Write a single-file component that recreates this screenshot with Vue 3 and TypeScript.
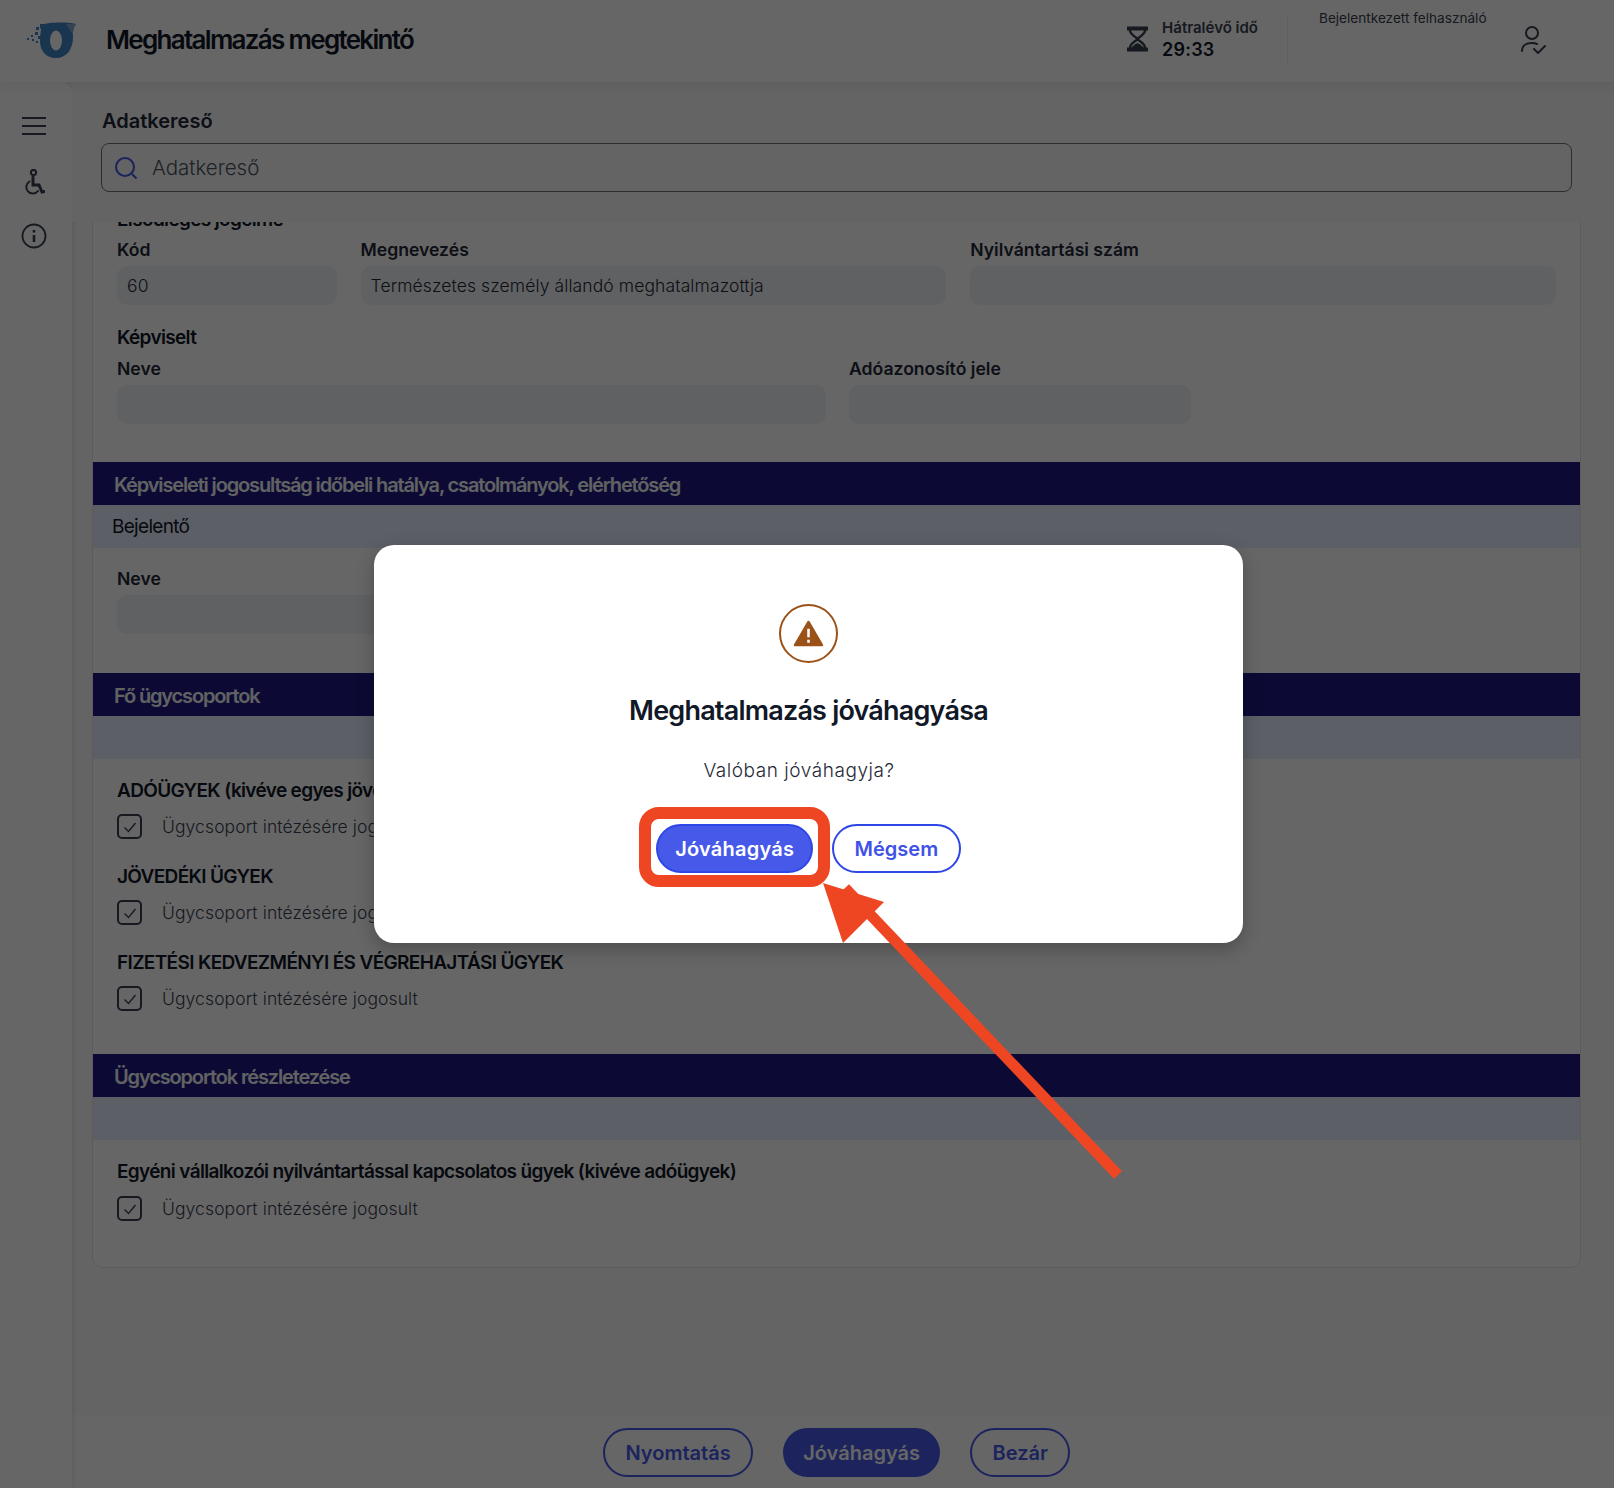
<template>
  <div class="page">
    <header class="topbar">
      <svg class="logo" viewBox="0 0 54 40" width="54" height="40">
        <path d="M16 4 C22 1 40 1 50 3 C47 7 47 10 47 16 C47 29 40 37 30 37 C20 37 14 30 14 20 C14 13 15 8 16 4 Z" fill="#3f86c8" />
        <path d="M40 3 L50 3 C47 7 47 10 47 14 Z" fill="#7fa8c8" />
        <ellipse cx="30" cy="19.5" rx="6" ry="10" fill="#fff" />
        <g fill="#3f86c8">
          <rect x="14" y="3" width="4.5" height="4.5" /><rect x="20" y="3" width="4.5" height="4" />
          <rect x="16" y="9" width="5" height="5" /><rect x="10" y="6" width="3" height="3" />
          <rect x="9" y="11" width="3" height="3" /><rect x="5" y="14" width="2" height="2" />
          <rect x="1" y="17" width="2" height="2" /><rect x="6" y="18" width="2" height="2" />
          <rect x="12" y="15" width="3" height="3" /><rect x="19" y="15" width="4" height="4" />
          <rect x="10" y="20" width="2" height="2" />
        </g>
      </svg>
      <h1 class="app-title">Meghatalmazás megtekintő</h1>
      <div class="timer">
        <svg viewBox="0 0 22 26" width="21" height="26" class="hourglass">
          <path d="M0 2 H22 M0 24 H22" stroke="#374151" stroke-width="4" fill="none" />
          <path d="M3 3 C3 9 9 10 11 13 C13 10 19 9 19 3 M3 23 C3 17 9 16 11 13 C13 16 19 17 19 23" stroke="#374151" stroke-width="2.4" fill="none" />
          <path d="M4 23 C6 20 9 18 11 17.5 C13 18 16 20 18 23 Z" fill="#374151" />
        </svg>
        <div class="timer-text">
          <span class="timer-label">Hátralévő idő</span>
          <span class="timer-value">29:33</span>
        </div>
      </div>
      <div class="user-box">
        <span class="user-label">Bejelentkezett felhasználó</span>
        <svg viewBox="0 0 26 30" width="26" height="30" class="user-icon" fill="none" stroke="#374151" stroke-width="2">
          <circle cx="12" cy="8" r="6" />
          <path d="M2 26 C2 21 6 18 12 18 C14 18 16 18.5 17 19" stroke-linecap="round" />
          <path d="M14 24 L18 28 L25 21" stroke-linecap="round" stroke-linejoin="round" />
        </svg>
      </div>
    </header>

    <div class="body-row">
      <aside class="sidebar">
        <svg viewBox="0 0 26 20" width="26" height="20" fill="none" stroke="#374151" stroke-width="2">
          <path d="M1 2 H25 M1 10 H25 M1 18 H25" />
        </svg>
        <svg viewBox="0 0 22 26" width="22" height="26" fill="none" stroke="#374151" stroke-width="2" stroke-linecap="round">
          <circle cx="10.5" cy="3.5" r="2.6" />
          <path d="M10 8 V16 H16 L19 23 L21 22.5" stroke-width="3" />
          <path d="M6.5 12.5 A6.5 6.5 0 1 0 15 22" />
        </svg>
        <svg viewBox="0 0 26 26" width="26" height="26" fill="none" stroke="#374151" stroke-width="1.8">
          <circle cx="13" cy="13" r="11.5" />
          <path d="M13 12 V19 M13 7 V9.6" stroke-width="2.6" />
        </svg>
      </aside>

      <main class="main">
        <section class="search-block">
          <label class="search-title">Adatkereső</label>
          <div class="search-box">
            <svg viewBox="0 0 24 24" width="24" height="24" fill="none" stroke="#4659e8" stroke-width="2.1">
              <circle cx="11" cy="11" r="9" />
              <path d="M18 18 L22.5 22.5" />
            </svg>
            <span class="search-text">Adatkereső</span>
          </div>
        </section>

        <div class="scroll">
          <div class="card">
            <div class="pad first">
              <h3 class="group-title clipped">Elsődleges jogcíme</h3>
              <div class="row">
                <div v-for="f in firstRow" :key="f.label" class="field" :class="f.cls">
                  <span class="label">{{ f.label }}</span>
                  <div class="input">{{ f.value }}</div>
                </div>
              </div>
              <h3 class="group-title kepv">Képviselt</h3>
              <div class="row tight">
                <div class="field w-name"><span class="label">Neve</span><div class="input"></div></div>
                <div class="field w-tax"><span class="label">Adóazonosító jele</span><div class="input"></div></div>
              </div>
            </div>

            <div class="bar">Képviseleti jogosultság időbeli hatálya, csatolmányok, elérhetőség</div>
            <div class="subbar">Bejelentő</div>
            <div class="pad reporter">
              <div class="field w-name"><span class="label">Neve</span><div class="input"></div></div>
            </div>

            <div class="bar">Fő ügycsoportok</div>
            <div class="subbar"></div>
            <div class="pad groups">
              <div v-for="g in mainGroups" :key="g" class="group">
                <h3 class="group-title">{{ g }}</h3>
                <div class="check-row">
                  <span class="check">
                    <svg viewBox="0 0 16 16" width="16" height="16" fill="none" stroke="#374151" stroke-width="1.4"><path d="M2.5 8.5 L6.5 12.5 L13.5 4" /></svg>
                  </span>
                  <span class="check-text">Ügycsoport intézésére jogosult</span>
                </div>
              </div>
            </div>

            <div class="bar">Ügycsoportok részletezése</div>
            <div class="subbar"></div>
            <div class="pad details">
              <h3 class="group-title">Egyéni vállalkozói nyilvántartással kapcsolatos ügyek (kivéve adóügyek)</h3>
              <div class="check-row">
                <span class="check">
                  <svg viewBox="0 0 16 16" width="16" height="16" fill="none" stroke="#374151" stroke-width="1.4"><path d="M2.5 8.5 L6.5 12.5 L13.5 4" /></svg>
                </span>
                <span class="check-text">Ügycsoport intézésére jogosult</span>
              </div>
            </div>
          </div>
        </div>

        <footer class="footer">
          <button class="btn outline">Nyomtatás</button>
          <button class="btn solid">Jóváhagyás</button>
          <button class="btn outline">Bezár</button>
        </footer>
      </main>
    </div>

    <div class="backdrop">
      <div class="modal">
        <span class="warn">
          <svg viewBox="0 0 32 28" width="31" height="27">
            <path d="M16 2 L30 26 H2 Z" fill="#9a5218" stroke="#9a5218" stroke-width="2.5" stroke-linejoin="round" />
            <path d="M16 9 V18 M16 20.5 V23.5" stroke="#fff" stroke-width="2.6" />
          </svg>
        </span>
        <h2 class="modal-title">Meghatalmazás jóváhagyása</h2>
        <p class="modal-text">Valóban jóváhagyja?</p>
        <div class="modal-actions">
          <button class="btn m-solid">Jóváhagyás</button>
          <button class="btn m-outline">Mégsem</button>
        </div>
      </div>
    </div>

    <!-- annotation drawn over the screenshot -->
    <svg class="annotation" width="1614" height="1488" viewBox="0 0 1614 1488">
      <rect x="645" y="813" width="179" height="68" rx="14" fill="none" stroke="#ee4623" stroke-width="12" />
      <path d="M1118 1175 L845 888" stroke="#ee4623" stroke-width="11" fill="none" />
      <path d="M823 883 L884 902 L843 943 Z" fill="#ee4623" />
    </svg>
  </div>
</template>

<script setup lang="ts">
interface Field {
  label: string;
  value: string;
  cls: string;
}

const firstRow: Field[] = [
  { label: "Kód", value: "60", cls: "w-code" },
  { label: "Megnevezés", value: "Természetes személy állandó meghatalmazottja", cls: "w-desc" },
  { label: "Nyilvántartási szám", value: "", cls: "w-desc" },
];

const mainGroups: string[] = [
  "ADÓÜGYEK (kivéve egyes jövedéki ügyek)",
  "JÖVEDÉKI ÜGYEK",
  "FIZETÉSI KEDVEZMÉNYI ÉS VÉGREHAJTÁSI ÜGYEK",
];
</script>

<style>
html,
body {
  margin: 0;
  background: #f9f9fa;
}
</style>

<style scoped>
.page {
  position: relative;
  width: 1614px;
  height: 1488px;
  overflow: hidden;
  display: flex;
  flex-direction: column;
  font-family: Inter, "Liberation Sans", sans-serif;
  color: #1f2937;
  background: #f9f9fa;
}
.topbar {
  height: 82px;
  flex: none;
  display: flex;
  align-items: center;
  background: #fff;
  padding-left: 26px;
  box-sizing: border-box;
  position: relative;
  z-index: 2;
  box-shadow: 0 4px 12px rgba(0, 0, 0, 0.06);
}
.logo {
  flex: none;
}
.app-title {
  margin: 0 0 3px 26px;
  font-size: 26px;
  font-weight: 600;
  letter-spacing: -1.7px;
  color: #111827;
  flex: 1;
}
.timer {
  display: flex;
  align-items: center;
  gap: 14px;
  height: 50px;
  padding-right: 29px;
  border-right: 1px solid #f0f0f2;
  margin-top: -4px;
}
.timer-text {
  display: flex;
  flex-direction: column;
  gap: 2px;
}
.timer-label {
  font-size: 15px;
  font-weight: 600;
  color: #374151;
}
.timer-value {
  font-size: 18px;
  font-weight: 600;
  color: #111827;
  letter-spacing: 0.2px;
}
.user-box {
  width: 326px;
  height: 82px;
  box-sizing: border-box;
  padding: 7px 0 0 31px;
  position: relative;
}
.user-label {
  font-size: 13.6px;
  color: #374151;
}
.user-icon {
  position: absolute;
  left: 232px;
  top: 25px;
}
.body-row {
  flex: 1;
  display: flex;
  min-height: 0;
}
.sidebar {
  width: 72px;
  flex: none;
  background: #fff;
  border-top-right-radius: 10px;
  box-shadow: 2px 0 4px rgba(0, 0, 0, 0.08);
  display: flex;
  flex-direction: column;
  align-items: center;
  gap: 30px;
  padding: 34px 5px 0 0;
  box-sizing: border-box;
  position: relative;
  z-index: 1;
}
.sidebar svg:nth-child(2) {
  margin-top: 3px;
}
.sidebar svg:nth-child(3) {
  margin-top: -2px;
}
.main {
  flex: 1;
  min-width: 0;
  display: flex;
  flex-direction: column;
}
.search-block {
  height: 140px;
  flex: none;
  box-sizing: border-box;
  padding: 27px 42px 0 29px;
  background: #f9f9fa;
  position: relative;
  z-index: 1;
}
.search-title {
  display: block;
  font-size: 20px;
  font-weight: 600;
  line-height: 24px;
  margin-bottom: 10px;
  padding-left: 1px;
  color: #1f2937;
}
.search-box {
  height: 47px;
  border: 1px solid #6b7280;
  border-radius: 8px;
  display: flex;
  align-items: center;
  gap: 14px;
  padding-left: 12px;
  box-sizing: content-box;
}
.search-text {
  font-size: 20.5px;
  font-weight: 300;
  color: #4b5563;
}
.scroll {
  flex: 1;
  min-height: 0;
  overflow: hidden;
  padding: 0 33px 0 20px;
}
.card {
  margin-top: -29px;
  background: #fff;
  border: 1px solid #e5e7eb;
  border-radius: 10px;
  box-sizing: border-box;
}
.pad {
  padding: 0 24px;
}
.pad.first {
  height: 254px;
  padding-top: 14px;
}
.pad.reporter {
  height: 105px;
  padding-top: 20px;
}
.pad.groups {
  height: 275px;
  padding-top: 20px;
}
.pad.details {
  height: 107px;
  padding-top: 20px;
}
.group-title {
  margin: 0;
  font-size: 19px;
  font-weight: 600;
  line-height: 24px;
  letter-spacing: -0.65px;
  color: #111827;
}
.clipped {
  margin-bottom: 7px;
}
.kepv {
  margin: 21px 0 8px;
}
.row {
  display: flex;
  gap: 24px;
}
.row.tight {
  gap: 23px;
}
.field {
  display: flex;
  flex-direction: column;
}
.w-code {
  width: 220px;
}
.w-desc {
  width: 587px;
}
.w-name {
  width: 709px;
}
.w-tax {
  width: 342px;
}
.label {
  font-size: 17.6px;
  font-weight: 600;
  line-height: 22px;
  margin-bottom: 5px;
  color: #1f2937;
}
.input {
  height: 39px;
  line-height: 39px;
  border-radius: 10px;
  background: #f1f2f6;
  padding: 0 10px;
  font-size: 17.5px;
  font-weight: 300;
  letter-spacing: 0.1px;
  color: #1f2937;
}
.bar {
  height: 43px;
  line-height: 46px;
  background: #1e1a85;
  color: #f3f4f6;
  padding-left: 21px;
  font-size: 20px;
  font-weight: 600;
  letter-spacing: -1.15px;
}
.subbar {
  height: 43px;
  line-height: 43px;
  background: #e6edff;
  padding-left: 19px;
  font-size: 19px;
  letter-spacing: -0.7px;
  color: #111827;
}
.group {
  margin-bottom: 26px;
}
.check-row {
  display: flex;
  align-items: center;
  gap: 20px;
  margin-top: 12px;
}
.group .check-row {
  margin-top: 11px;
}
.check {
  width: 21px;
  height: 21px;
  border: 2px solid #374151;
  border-radius: 5px;
  display: flex;
  align-items: center;
  justify-content: center;
}
.check-text {
  font-size: 17.5px;
  font-weight: 300;
  color: #374151;
  letter-spacing: 0.1px;
}
.footer {
  height: 73px;
  flex: none;
  background: #fff;
  display: flex;
  align-items: center;
  gap: 30px;
  padding: 2px 0 0 531px;
  box-sizing: border-box;
}
.btn {
  height: 49px;
  border-radius: 25px;
  box-sizing: border-box;
  font-family: inherit;
  font-size: 20px;
  font-weight: 600;
  padding: 0 20px;
  cursor: pointer;
}
.btn.outline {
  background: #fff;
  border: 2px solid #4659e8;
  color: #4659e8;
  padding: 0 20.5px;
}
.btn.solid {
  background: #4659e8;
  border: 2px solid #4659e8;
  color: #fff;
  padding: 0 18px;
}
.backdrop {
  position: absolute;
  inset: 0;
  background: rgba(0, 0, 0, 0.6);
  z-index: 5;
}
.modal {
  position: absolute;
  left: 374px;
  top: 545px;
  width: 869px;
  height: 398px;
  background: #fff;
  border-radius: 20px;
  box-shadow: 0 6px 18px rgba(0, 0, 0, 0.25);
  display: flex;
  flex-direction: column;
  align-items: center;
  padding-top: 59px;
  box-sizing: border-box;
}
.warn {
  width: 59px;
  height: 59px;
  box-sizing: border-box;
  border: 2px solid #9a5218;
  border-radius: 50%;
  display: flex;
  align-items: center;
  justify-content: center;
}
.modal-title {
  margin: 31px 0 0;
  font-size: 27px;
  line-height: 34px;
  font-weight: 600;
  letter-spacing: -0.8px;
  color: #111827;
}
.modal-text {
  margin: 30px 19px 0 0;
  font-size: 19px;
  line-height: 26px;
  font-weight: 300;
  letter-spacing: 0.55px;
  color: #1f2937;
}
.modal-actions {
  display: flex;
  gap: 19px;
  margin: 40px 0 0;
}
.btn.m-solid {
  background: #4659e8;
  border: 2px solid #2f46e6;
  color: #fff;
  padding: 0 17px;
  letter-spacing: 0.2px;
}
.btn.m-outline {
  background: #fff;
  border: 2px solid #2f46e6;
  color: #3f52e8;
  padding: 0 20.5px;
}
.annotation {
  position: absolute;
  left: 0;
  top: 0;
  z-index: 6;
  pointer-events: none;
}
</style>
